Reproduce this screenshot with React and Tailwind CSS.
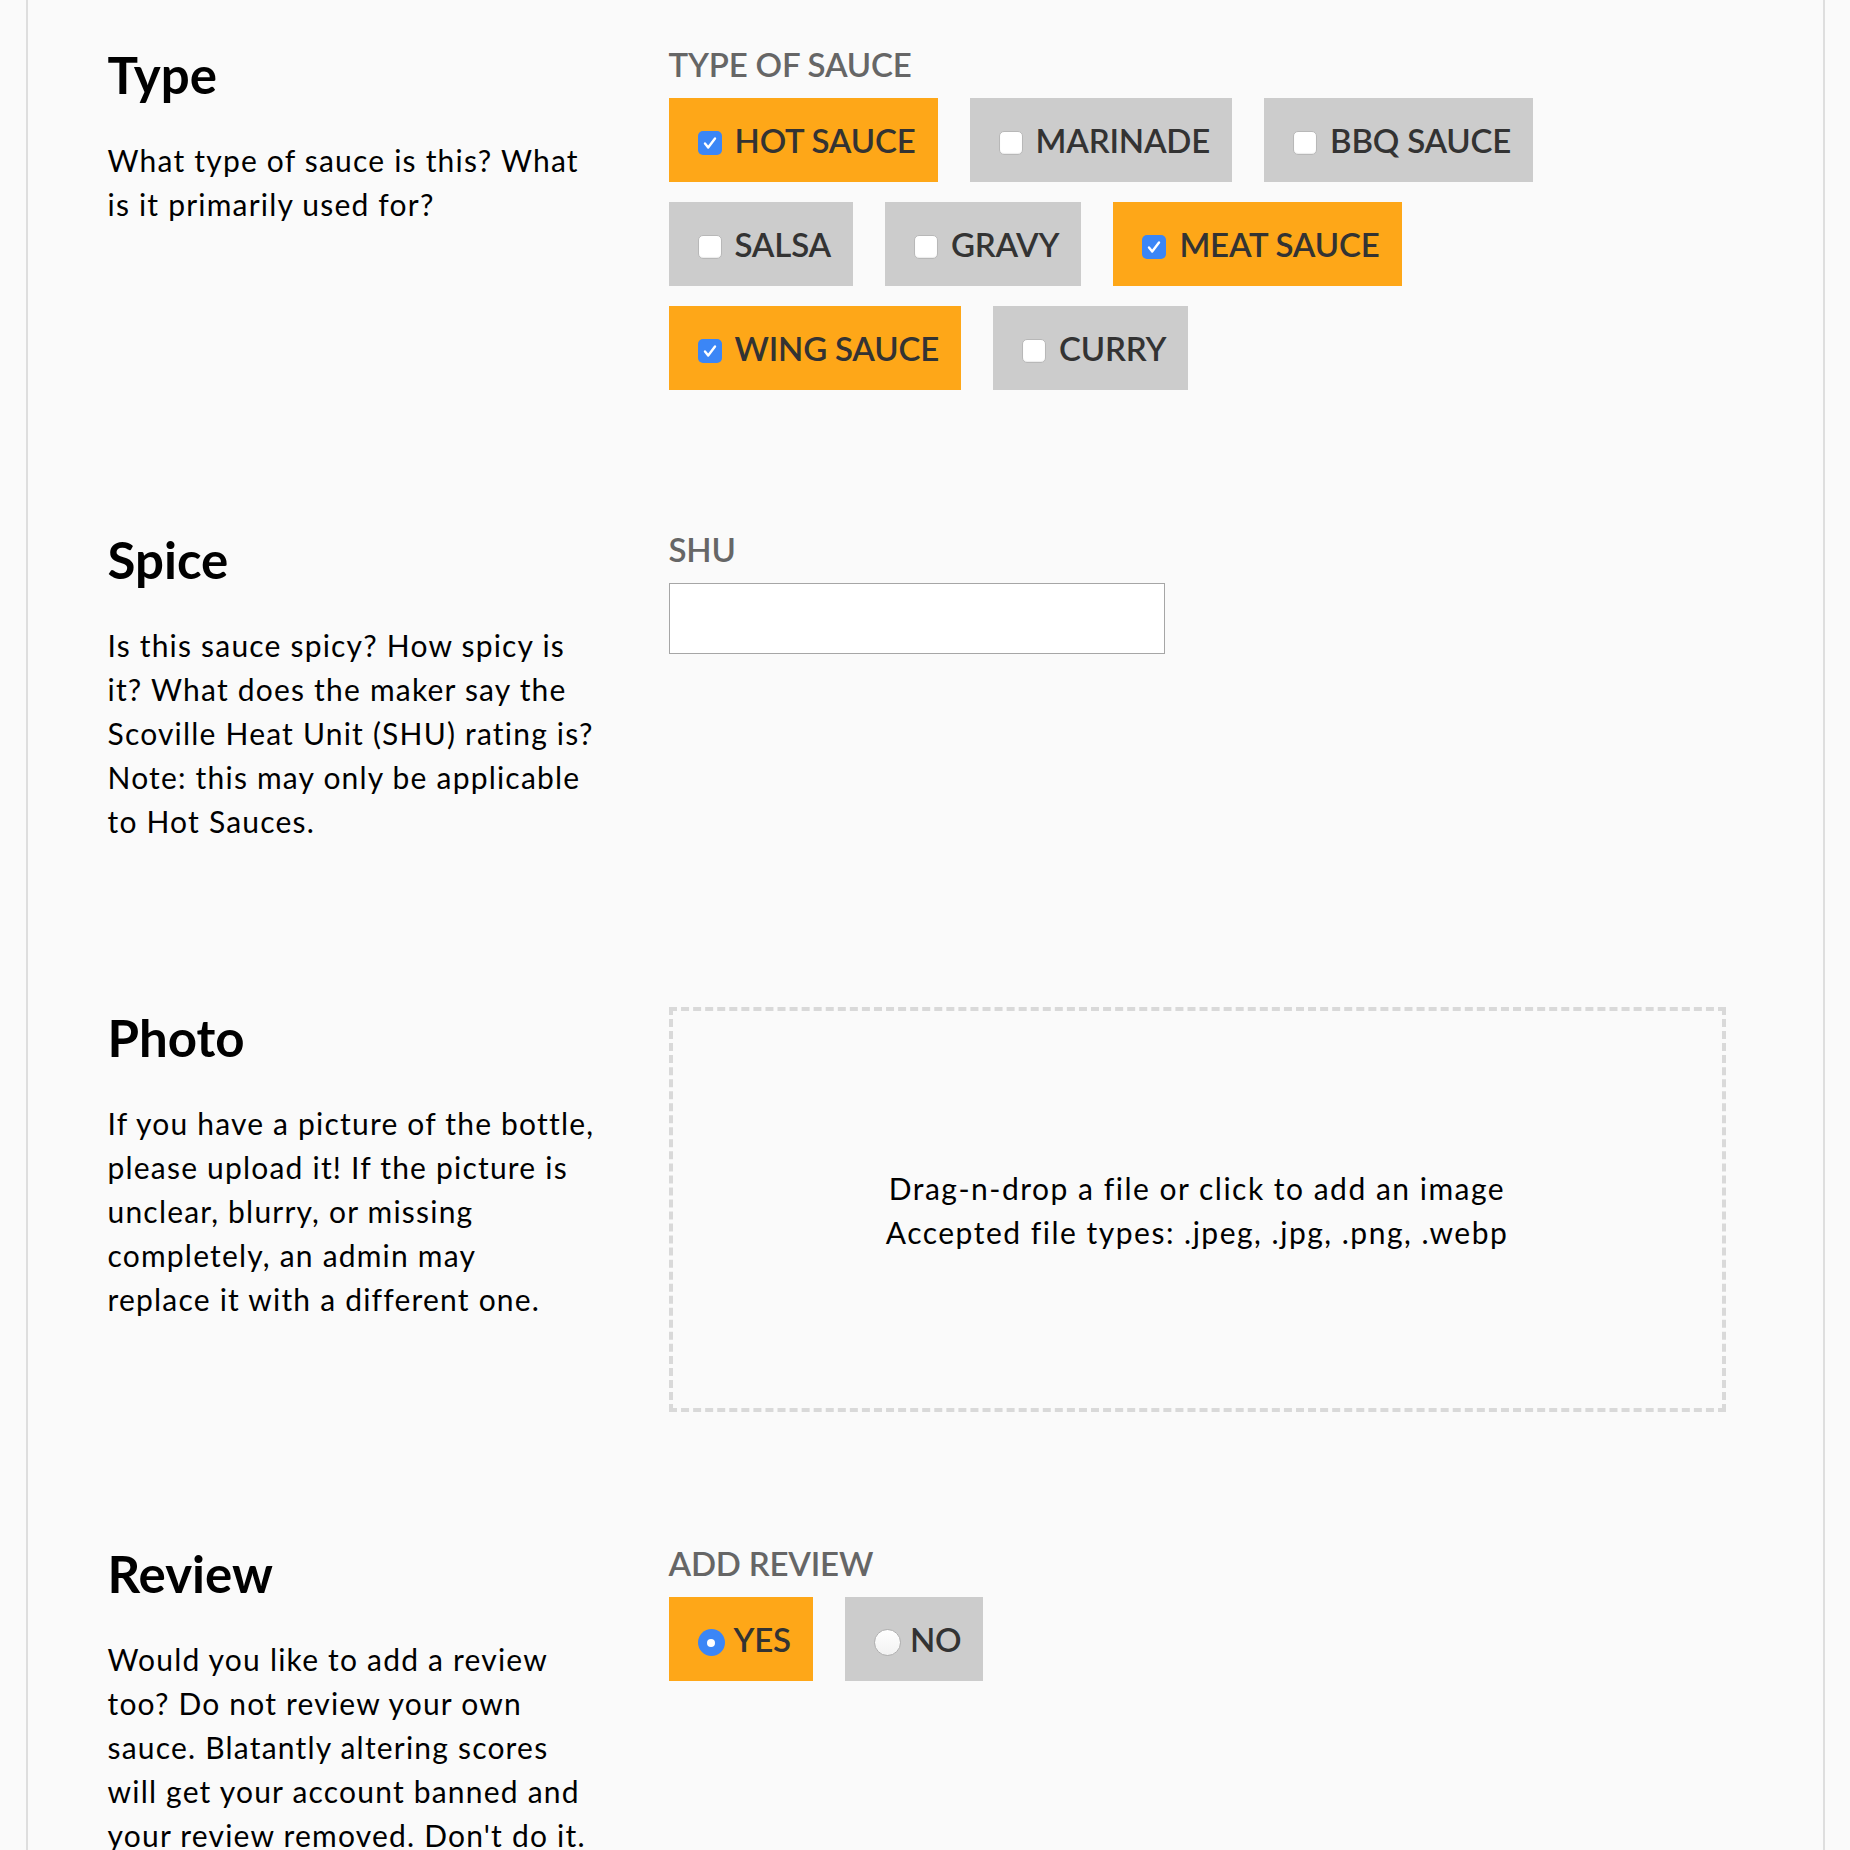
import React from 'react';

const sauceTypes = [
  { label: 'HOT SAUCE', checked: true },
  { label: 'MARINADE', checked: false },
  { label: 'BBQ SAUCE', checked: false },
  { label: 'SALSA', checked: false },
  { label: 'GRAVY', checked: false },
  { label: 'MEAT SAUCE', checked: true },
  { label: 'WING SAUCE', checked: true },
  { label: 'CURRY', checked: false },
];

const body = "font-['Lato','Liberation_Sans',sans-serif]";

function CheckBox({ checked }) {
  if (checked) {
    return (
      <span className="mt-[6px] flex h-[24px] w-[24px] shrink-0 items-center justify-center rounded-[5px] bg-[#3b86f6]">
        <svg width="18" height="18" viewBox="0 0 18 18" fill="none">
          <path d="M4 9.5 L7.2 13.5 L14 4.5" stroke="white" strokeWidth="2.4" strokeLinecap="round" strokeLinejoin="round" />
        </svg>
      </span>
    );
  }
  return (
    <span className="mt-[6px] h-[24px] w-[24px] shrink-0 rounded-[5px] border border-[#b8b8b8] bg-white shadow-[inset_0_-1px_1px_rgba(0,0,0,0.08)]" />
  );
}

function Radio({ checked }) {
  if (checked) {
    return (
      <span className="mt-[7px] flex h-[27px] w-[27px] shrink-0 items-center justify-center rounded-full bg-[#3b86f6]">
        <span className="h-[8px] w-[8px] rounded-full bg-white" />
      </span>
    );
  }
  return (
    <span className="mt-[7px] h-[27px] w-[27px] shrink-0 rounded-full border border-[#b0b0b0] bg-gradient-to-b from-white to-[#f2f2f2]" />
  );
}

function Choice({ label, checked, radio }) {
  return (
    <label
      className={
        'flex h-[84px] items-center pl-[29px] pr-[22px] text-[33px] font-semibold tracking-[-0.2px] text-[#333] ' +
        (radio ? 'gap-[9px] ' : 'gap-[13px] ') +
        (checked ? 'bg-[#fea718]' : 'bg-[#cccccc]')
      }
    >
      {radio ? <Radio checked={checked} /> : <CheckBox checked={checked} />}
      <span className="leading-none">{label}</span>
    </label>
  );
}

function FieldLabel({ children }) {
  return <div className="mb-[13px] text-[33px] leading-[41px] font-semibold tracking-[-0.2px] text-[#666]">{children}</div>;
}

function Section({ title, lines, className, children }) {
  return (
    <section className={'flex ' + className}>
      <div className="w-[561px] shrink-0">
        <h2 className="text-[51px] leading-[61px] font-bold text-black">{title}</h2>
        <p className="mt-[33px] text-[30px] leading-[44px] tracking-[1.2px] text-black">
          {lines.map((l) => (
            <span key={l} className="block whitespace-nowrap">
              {l}
            </span>
          ))}
        </p>
      </div>
      <div className="w-[1057px]">{children}</div>
    </section>
  );
}

export default function App() {
  return (
    <div className={'min-h-screen bg-[#fafafa] ' + body}>
      <div className="mx-auto w-[1799px] border-x-2 border-[#dedede] pl-[80px] pt-[44px]">
        <Section
          title="Type"
          lines={['What type of sauce is this? What', 'is it primarily used for?']}
          className="pb-[139px]"
        >
          <FieldLabel>TYPE OF SAUCE</FieldLabel>
          <div className="flex max-w-[920px] flex-wrap gap-x-[32px] gap-y-[20px]">
            {sauceTypes.map((it) => (
              <Choice key={it.label} label={it.label} checked={it.checked} />
            ))}
          </div>
        </Section>

        <Section
          title="Spice"
          lines={[
            'Is this sauce spicy? How spicy is',
            'it? What does the maker say the',
            'Scoville Heat Unit (SHU) rating is?',
            'Note: this may only be applicable',
            'to Hot Sauces.',
          ]}
          className="pb-[164px]"
        >
          <FieldLabel>SHU</FieldLabel>
          <input type="text" className="h-[71px] w-[496px] border border-[#a6a6a6] bg-white px-3 text-[30px] outline-none" />
        </Section>

        <Section
          title="Photo"
          lines={[
            'If you have a picture of the bottle,',
            'please upload it! If the picture is',
            'unclear, blurry, or missing',
            'completely, an admin may',
            'replace it with a different one.',
          ]}
          className="pb-[131px]"
        >
          <div className="flex h-[405px] flex-col items-center justify-center border-4 border-dashed border-[#d9d9d9] text-center text-[30px] leading-[44px] tracking-[1.5px] text-black">
            <div>Drag-n-drop a file or click to add an image</div>
            <div>Accepted file types: .jpeg, .jpg, .png, .webp</div>
          </div>
        </Section>

        <Section
          title="Review"
          lines={[
            'Would you like to add a review',
            'too? Do not review your own',
            'sauce. Blatantly altering scores',
            'will get your account banned and',
            "your review removed. Don't do it.",
          ]}
          className="pb-[120px]"
        >
          <FieldLabel>ADD REVIEW</FieldLabel>
          <div className="flex gap-x-[32px]">
            <Choice label="YES" checked radio />
            <Choice label="NO" checked={false} radio />
          </div>
        </Section>
      </div>
    </div>
  );
}
